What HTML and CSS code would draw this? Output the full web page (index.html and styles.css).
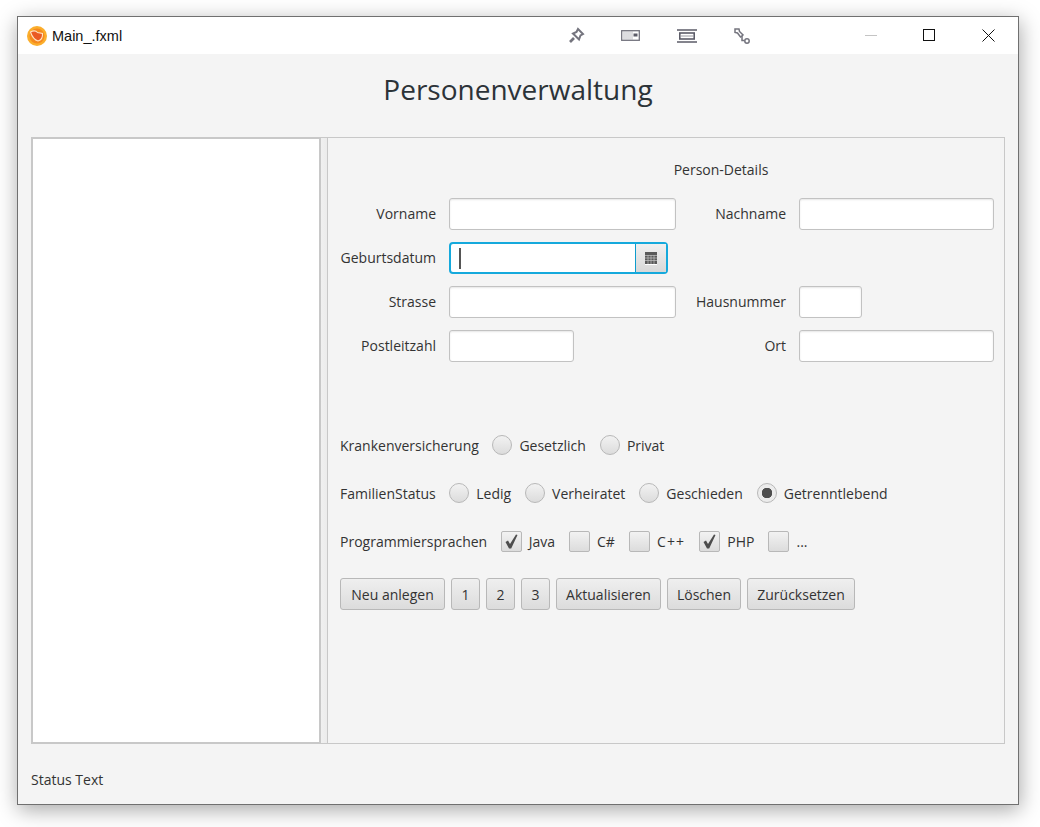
FILE: index.html
```html
<!DOCTYPE html>
<html lang="en">
<head>
    <meta charset="UTF-8">
    <title>Main_.fxml</title>
    <link rel="stylesheet" href="styles.css">
</head>
<body>
    <div class="window">
        <div class="titlebar">
            <svg class="app-icon" width="20" height="20" viewBox="0 0 20 20">
                <circle cx="10" cy="10" r="10" fill="#fbae2c"/>
                <circle cx="10" cy="10" r="7.5" fill="#f58a1f"/>
                <path d="M3.5 6 Q8 3.5 10.5 6.5 L15.5 7.5 Q16 13.5 11 15 Q6 13.5 3.5 6 Z" fill="#ea5a24" stroke="#ffe3c4" stroke-width="1.1"/>
            </svg>
            <span class="app-title">Main_.fxml</span>
            <div class="tools">
                <svg width="18" height="18" viewBox="0 0 18 18" fill="none" stroke="#74747e" stroke-width="2">
                    <path d="M11 2 L16 7 L13.5 8.5 L12 12.5 L6 6.5 L9.5 5 Z"/>
                    <path d="M7 11 L3 15" stroke-width="2.6"/>
                </svg>
                <svg width="20" height="13" viewBox="0 0 20 13" fill="none" stroke="#74747e" stroke-width="1.3">
                    <rect x="0.7" y="1.7" width="17.6" height="9.6"/>
                    <path d="M3 2 V11 M5 2 V11 M7 2 V11 M9 2 V11 M11 2 V11" stroke-width="0.9" stroke="#b4b4ba"/>
                    <rect x="12.5" y="4.5" width="4" height="3" fill="#5c5c68" stroke="none"/>
                </svg>
                <svg width="20" height="14" viewBox="0 0 20 14" fill="none" stroke="#5c5c68" stroke-width="1.6">
                    <path d="M0 1 H20 M0 13 H20"/>
                    <rect x="2.8" y="4" width="14.4" height="6"/>
                    <path d="M3 7 H17" stroke="#9a9aa2" stroke-width="1"/>
                </svg>
                <svg width="16" height="16" viewBox="0 0 16 16" fill="none" stroke="#74747e" stroke-width="1.5">
                    <path d="M1 1 H5 L5.5 3.5 L9 7 L6.5 9 L3.5 5 L1 4.5 Z"/>
                    <path d="M8 8 V12.5 H10.5"/>
                    <circle cx="13" cy="13" r="2.2"/>
                </svg>
            </div>
            <div class="caption">
                <span class="cap-btn"><i class="cap-min"></i></span>
                <span class="cap-btn"><i class="cap-max"></i></span>
                <span class="cap-btn">
                    <svg width="13" height="13" viewBox="0 0 13 13" stroke="#111"><path d="M0.5 0.5 L12.5 12.5 M12.5 0.5 L0.5 12.5"/></svg>
                </span>
            </div>
        </div>

        <div class="content">
            <h1>Personenverwaltung</h1>

            <div class="split">
                <div class="list-pane"></div>
                <div class="divider"></div>
                <div class="details">
                    <div class="details-title">Person-Details</div>

                    <div class="fields">
                        <label class="lbl">Vorname</label>
                        <input class="inp" type="text">
                        <label class="lbl">Nachname</label>
                        <input class="inp inp-side" type="text">

                        <label class="lbl">Geburtsdatum</label>
                        <div class="date-picker">
                            <span class="date-input"><i class="caret"></i></span>
                            <span class="date-btn">
                                <svg width="12" height="13" viewBox="0 0 12 13">
                                    <rect width="12" height="12" fill="#5a5a5a"/>
                                    <path d="M0 3.5 H12 M0 6 H12 M0 8.5 H12 M3 3 V12 M6 3 V12 M9 3 V12" stroke="#c4c4c4" stroke-width="0.7"/>
                                    <path d="M0 12.5 H12" stroke="#fff"/>
                                </svg>
                            </span>
                        </div>
                        <span></span>
                        <span></span>

                        <label class="lbl">Strasse</label>
                        <input class="inp" type="text">
                        <label class="lbl">Hausnummer</label>
                        <input class="inp inp-nr" type="text">

                        <label class="lbl">Postleitzahl</label>
                        <input class="inp inp-plz" type="text">
                        <label class="lbl">Ort</label>
                        <input class="inp inp-side" type="text">
                    </div>

                    <div class="opt-row first">
                        <span class="opt-label">Krankenversicherung</span>
                        <span class="radio"></span><span class="opt">Gesetzlich</span>
                        <span class="radio"></span><span class="opt">Privat</span>
                    </div>
                    <div class="opt-row">
                        <span class="opt-label">FamilienStatus</span>
                        <span class="radio"></span><span class="opt">Ledig</span>
                        <span class="radio"></span><span class="opt">Verheiratet</span>
                        <span class="radio"></span><span class="opt">Geschieden</span>
                        <span class="radio selected"></span><span class="opt">Getrenntlebend</span>
                    </div>
                    <div class="opt-row">
                        <span class="opt-label">Programmiersprachen</span>
                        <span class="check"><svg width="15" height="15" viewBox="0 0 15 15"><path d="M1.5 8 L4 6.5 L6 10 L12 0.5 L13.5 1 L7.2 14.5 L5 14.5 Z" fill="#4d4d4d"/></svg></span><span class="opt">Java</span>
                        <span class="check"></span><span class="opt">C#</span>
                        <span class="check"></span><span class="opt opt-cpp">C++</span>
                        <span class="check"><svg width="15" height="15" viewBox="0 0 15 15"><path d="M1.5 8 L4 6.5 L6 10 L12 0.5 L13.5 1 L7.2 14.5 L5 14.5 Z" fill="#4d4d4d"/></svg></span><span class="opt">PHP</span>
                        <span class="check"></span><span class="opt">...</span>
                    </div>

                    <div class="buttons">
                        <button class="btn">Neu anlegen</button>
                        <button class="btn">1</button>
                        <button class="btn">2</button>
                        <button class="btn">3</button>
                        <button class="btn">Aktualisieren</button>
                        <button class="btn">Löschen</button>
                        <button class="btn">Zurücksetzen</button>
                    </div>
                </div>
            </div>

            <div class="status">Status Text</div>
        </div>
    </div>
</body>
</html>
```

FILE: styles.css
```css
* {
    box-sizing: border-box;
}

body {
    margin: 0;
    min-height: 827px;
    padding: 16px 0 0 17px;
    background-color: #fff;
    font-family: "Open Sans", Arial, sans-serif;
    font-size: 14px;
    color: #333;
    overflow: hidden;
}

.window {
    width: 1002px;
    height: 789px;
    border: 1px solid #707070;
    box-shadow: 1px 5px 20px rgba(0, 0, 0, 0.35);
    display: flex;
    flex-direction: column;
    background-color: #f4f4f4;
}

/* title bar */
.titlebar {
    height: 37px;
    background-color: #fff;
    display: flex;
    align-items: center;
    padding-left: 9px;
    flex-shrink: 0;
}

.app-icon {
    margin-right: 5px;
}

.app-title {
    font-family: "Liberation Sans", Arial, sans-serif;
    font-size: 14.5px;
    color: #111;
    width: 496px;
}

.tools {
    display: grid;
    grid-template-columns: repeat(4, 55.5px);
    justify-items: center;
    align-items: center;
    height: 36px;
}

.caption {
    display: flex;
    margin-left: auto;
}

.cap-btn {
    width: 59px;
    height: 36px;
    margin-bottom: 1px;
    display: flex;
    align-items: center;
    justify-content: center;
}

.cap-min {
    width: 12px;
    height: 1px;
    background-color: #c4c4c4;
}

.cap-max {
    width: 12px;
    height: 12px;
    margin-right: 1px;
    border: 1px solid #111;
}

/* content */
.content {
    flex: 1;
    display: flex;
    flex-direction: column;
    padding: 0 13px;
}

h1 {
    margin: 0;
    height: 83px;
    line-height: 71px;
    font-size: 28px;
    font-weight: normal;
    text-align: center;
    color: #2c3338;
}

.split {
    height: 607px;
    display: flex;
    border: 1px solid #c8c8c8;
}

.list-pane {
    width: 289px;
    background-color: #fff;
    border: 1px solid #c8c8c8;
    border-right-width: 2px;
    flex-shrink: 0;
}

.divider {
    width: 7px;
    background: linear-gradient(to right, #f0f0f0, #ececec);
    border-right: 1px solid #c8c8c8;
    flex-shrink: 0;
}

.details {
    flex: 1;
    padding: 0 10px 0 12px;
}

.details-title {
    height: 60px;
    padding-top: 22px;
    padding-left: 108px;
    line-height: 20px;
    text-align: center;
}

.fields {
    display: grid;
    grid-template-columns: 96px 240px 110px 208px;
    grid-auto-rows: 32px;
    row-gap: 12px;
}

.lbl {
    line-height: 32px;
    text-align: right;
}

.inp {
    height: 32px;
    width: 227px;
    margin-left: 13px;
    border: 1px solid #c2c2c2;
    border-radius: 3px;
    background-color: #fff;
    box-shadow: inset 0 1px 2px rgba(0, 0, 0, 0.1);
    outline: none;
}

.inp-side {
    width: 195px;
}

.inp-nr {
    width: 63px;
}

.inp-plz {
    width: 125px;
}

.date-picker {
    margin-left: 13px;
    width: 219px;
    height: 32px;
    display: flex;
    border: 2px solid #15a9dc;
    border-radius: 4px;
    background-color: #fff;
}

.date-input {
    flex: 1;
    display: flex;
    align-items: center;
    padding-left: 8px;
}

.caret {
    width: 1.5px;
    height: 21px;
    background-color: #555;
}

.date-btn {
    width: 31px;
    display: flex;
    align-items: center;
    justify-content: center;
    border-left: 1px solid #0e9ccd;
    background: linear-gradient(#f0f0f0, #d8d8d8);
}

.opt-row {
    height: 32px;
    margin-top: 16px;
    display: flex;
    align-items: center;
}

.opt-row.first {
    margin-top: 67px;
}

.opt-label {
    margin-right: 13.5px;
}

.radio {
    width: 20px;
    height: 20px;
    border-radius: 50%;
    border: 1px solid #b8b8b8;
    background: linear-gradient(#f2f2f2, #dcdcdc);
    margin-right: 7px;
    flex-shrink: 0;
}

.radio.selected {
    background: radial-gradient(circle, #4f4f4f 0 5px, #ececec 5.5px);
}

.opt {
    margin-right: 14px;
}

.check {
    width: 21px;
    height: 21px;
    border: 1px solid #b8b8b8;
    border-radius: 2px;
    background: linear-gradient(#f2f2f2, #dcdcdc);
    margin-right: 7px;
    flex-shrink: 0;
    display: flex;
    align-items: center;
    justify-content: center;
}

.opt-cpp {
    letter-spacing: 1.2px;
}

.buttons {
    display: grid;
    grid-template-columns: 105px 29px 29px 29px 105px 74px 108px;
    column-gap: 6px;
    margin-top: 21px;
}

.btn {
    height: 32px;
    padding: 0;
    border: 1px solid #b8b8b8;
    border-radius: 3px;
    background: linear-gradient(#efefef, #dcdcdc);
    font-family: inherit;
    font-size: 14px;
    color: #333;
}

.status {
    padding-top: 26px;
    line-height: 20px;
}
```
